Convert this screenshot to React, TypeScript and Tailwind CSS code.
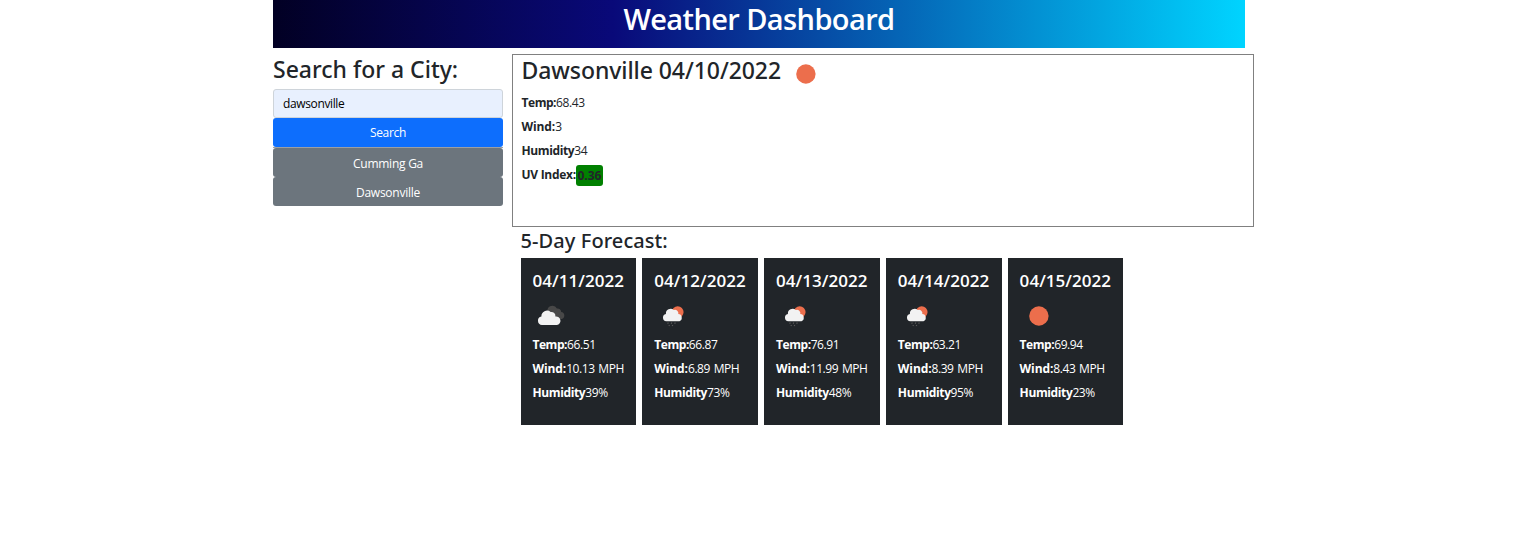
type IconName = "clouds" | "rain" | "sun";

interface Day {
  date: string;
  icon: IconName;
  temp: string;
  wind: string;
  humidity: string;
}

const days: Day[] = [
  { date: "04/11/2022", icon: "clouds", temp: "66.51", wind: "10.13 MPH", humidity: "39%" },
  { date: "04/12/2022", icon: "rain", temp: "66.87", wind: "6.89 MPH", humidity: "73%" },
  { date: "04/13/2022", icon: "rain", temp: "76.91", wind: "11.99 MPH", humidity: "48%" },
  { date: "04/14/2022", icon: "rain", temp: "63.21", wind: "8.39 MPH", humidity: "95%" },
  { date: "04/15/2022", icon: "sun", temp: "69.94", wind: "8.43 MPH", humidity: "23%" },
];

const cities = ["Cumming Ga", "Dawsonville"];

const labelTracking: Record<string, string> = {
  "Temp:": "tracking-[-0.45px]",
  "Wind:": "tracking-[-0.1px]",
  Humidity: "tracking-[-0.38px]",
};

function WeatherIcon({ name }: { name: IconName }) {
  return (
    <svg viewBox="0 0 38 38" className="block h-[38px] w-[38px] shrink-0">
      {name === "sun" && <circle cx="18.9" cy="19" r="9.7" fill="#ec6e4c" />}
      {name === "clouds" && (
        <>
          <path
            d="M15.500 14.500a5 5 0 0 1 9.400-3a3.600 3.600 0 0 1 4.300 3.500a3.600 3.600 0 0 1 .6 7h-9z"
            fill="#484848"
          />
          <path
            d="M10 28a4.300 4.300 0 0 1-.6-8.500a5.600 5.600 0 0 1 9.300-4.500a4 4 0 0 1 4.700 4.500a4.300 4.300 0 0 1 1.500 8.500z"
            fill="#f2f2f2"
          />
        </>
      )}
      {name === "rain" && (
        <>
          <circle cx="23.700" cy="15.100" r="5.900" fill="#ec6e4c" />
          <path
            d="M12.300 24.200a3.700 3.700 0 0 1-.4-7.300a4.700 4.700 0 0 1 7.900-3.800a3.400 3.400 0 0 1 4.500 4a3.700 3.700 0 0 1 1.200 7.100z"
            fill="#f2f2f2"
          />
          <path
            d="M14.300 25.400l-.6 1.300M17.800 25.400l-.6 1.300M21.300 25.400l-.6 1.300M15.500 27.900l-.6 1.200M18.800 27.900l-.6 1.200"
            stroke="#5a5a5a" strokeWidth="1.100" fill="none"
          />
        </>
      )}
    </svg>
  );
}

function Reading({ label, value }: { label: string; value: string }) {
  return (
    <p className="h-6 whitespace-nowrap text-[12px] leading-[18px]">
      <span className={`font-bold ${labelTracking[label]}`}>{label}</span>
      <span className="tracking-[-0.42px] [word-spacing:1px]">{value}</span>
    </p>
  );
}

function DayCard({ day }: { day: Day }) {
  return (
    <article className="h-[167px] w-[115.6px] bg-[#212529] pl-[11.900px] pt-3 text-white">
      <h5 className="h-[27px] whitespace-nowrap text-[17px] font-semibold leading-[22px] tracking-[0.05px]">{day.date}</h5>
      <div className="h-[39px]">
        <WeatherIcon name={day.icon} />
      </div>
      <Reading label="Temp:" value={day.temp} />
      <Reading label="Wind:" value={day.wind} />
      <Reading label="Humidity" value={day.humidity} />
    </article>
  );
}

export default function App() {
  return (
    <div className="min-h-[558px] bg-white pl-[273px] font-['Open_Sans','Noto_Sans',sans-serif] text-[12px] text-[#212529]">
      <header className="flex h-12 w-[972px] justify-center bg-[linear-gradient(90deg,#020024_0%,#090979_35%,#00d4ff_100%)]">
        <h1 className="mt-px whitespace-nowrap text-[29px] font-semibold leading-[36px] tracking-[-0.6px] text-white">
          Weather Dashboard
        </h1>
      </header>
      <div className="flex">
        <aside className="w-[230px] pt-[7px]">
          <h3 className="h-[34px] whitespace-nowrap font-['Noto_Sans','Open_Sans',sans-serif] text-[23px] font-medium leading-[29px]">
            Search for a City:
          </h3>
          <input
            className="block h-[29px] w-full rounded-[3px] border border-[#ced4da] bg-[#e8f0fe] px-[9px] text-[12px] tracking-[-0.37px] text-black outline-none"
            defaultValue="dawsonville"
          />
          <button className="block h-[29px] w-full rounded-[3px] bg-[#0d6efd] pt-px text-[12px] tracking-[-0.3px] text-white">Search</button>
          <div className="h-px bg-[#9ba0a5]" />
          {cities.map((city) => (
            <button key={city} className="block h-[29px] w-full rounded-[3px] bg-[#6c757d] pt-[2px] text-[12px] tracking-[-0.25px] text-white">
              {city}
            </button>
          ))}
        </aside>
        <main className="ml-[9px] w-[742px] pt-1.5">
          <section className="h-[173px] border border-[#808080] pl-[8.500px]">
            <div className="flex h-[39px] items-start">
              <h3 className="mt-px w-[259px] whitespace-nowrap font-['Noto_Sans','Open_Sans',sans-serif] text-[23px] font-medium leading-[29px] tracking-[-0.07px]">
                Dawsonville 04/10/2022
              </h3>
              <div className="ml-[6px]">
                <WeatherIcon name="sun" />
              </div>
            </div>
            <Reading label="Temp:" value="68.43" />
            <Reading label="Wind:" value="3" />
            <Reading label="Humidity" value="34" />
            <p className="flex h-6 text-[12px] font-bold leading-[18px]">
              <span className="tracking-[-0.28px]">UV Index:</span>
              <span className="-mt-px h-[21px] rounded-[3px] bg-[green] px-[1.500px] leading-[21px]">0.36</span>
            </p>
          </section>
          <section className="pl-[8.600px]">
            <h4 className="h-[31px] whitespace-nowrap font-['Noto_Sans','Open_Sans',sans-serif] text-[20px] font-medium leading-[28px] tracking-[0.08px]">
              5-Day Forecast:
            </h4>
            <div className="flex gap-[6.200px]">
              {days.map((day) => (
                <DayCard key={day.date} day={day} />
              ))}
            </div>
          </section>
        </main>
      </div>
    </div>
  );
}
